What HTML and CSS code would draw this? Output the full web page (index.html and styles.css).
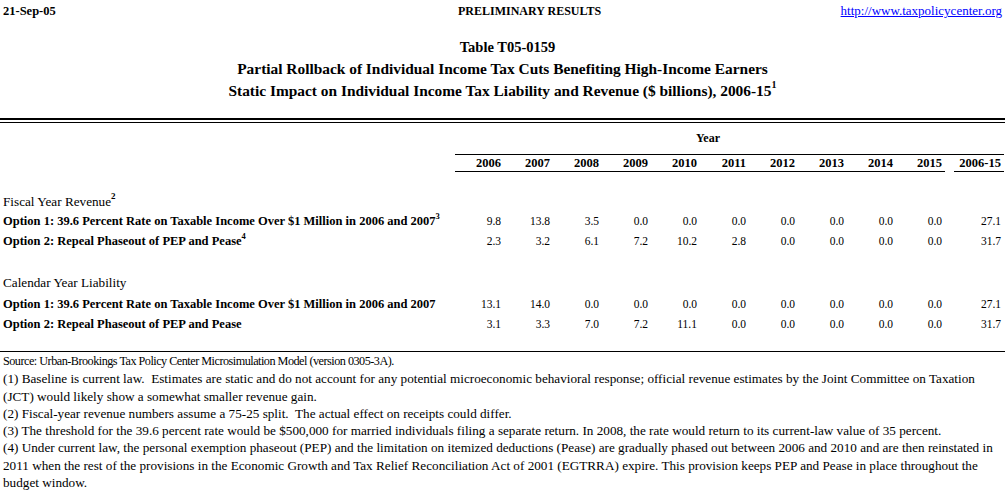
FILE: index.html
```html
<!DOCTYPE html>
<html>
<head>
<meta charset="utf-8">
<link rel="stylesheet" href="styles.css">
</head>
<body>
<div class="topbar">
  <div class="date">21-Sep-05</div>
  <div class="prelim">PRELIMINARY RESULTS</div>
  <div class="url"><a href="#">http://www.taxpolicycenter.org</a></div>
</div>
<div class="title">
  <div class="t1">Table T05-0159</div>
  <div>Partial Rollback of Individual Income Tax Cuts Benefiting High-Income Earners</div>
  <div>Static Impact on Individual Income Tax Liability and Revenue ($ billions), 2006-15<sup class="sup-title">1</sup></div>
</div>
<div class="rule-double"></div>
<table class="grid">
  <colgroup>
    <col class="c-label">
    <col class="c-year"><col class="c-year"><col class="c-year"><col class="c-year"><col class="c-year">
    <col class="c-year"><col class="c-year"><col class="c-year"><col class="c-year"><col class="c-year">
    <col class="c-gap">
    <col class="c-total">
  </colgroup>
  <tr class="r-year">
    <td></td>
    <td colspan="10" class="year-cap">Year</td>
    <td></td><td></td>
  </tr>
  <tr class="r-head">
    <td></td>
    <td class="yh">2006</td><td class="yh">2007</td><td class="yh">2008</td><td class="yh">2009</td><td class="yh">2010</td>
    <td class="yh">2011</td><td class="yh">2012</td><td class="yh">2013</td><td class="yh">2014</td><td class="yh">2015</td>
    <td class="yh-gap"></td>
    <td class="yh">2006-15</td>
  </tr>
  <tr class="r-sp1"><td colspan="13"></td></tr>
  <tr class="r-sec">
    <td colspan="13" class="sec">Fiscal Year Revenue<sup class="sup-sec">2</sup></td>
  </tr>
  <tr class="r-opt">
    <td class="lbl">Option 1: 39.6 Percent Rate on Taxable Income Over $1 Million in 2006 and 2007<sup class="sup-lbl">3</sup></td>
    <td class="num">9.8</td><td class="num">13.8</td><td class="num">3.5</td><td class="num">0.0</td><td class="num">0.0</td>
    <td class="num">0.0</td><td class="num">0.0</td><td class="num">0.0</td><td class="num">0.0</td><td class="num">0.0</td>
    <td></td><td class="num">27.1</td>
  </tr>
  <tr class="r-opt">
    <td class="lbl">Option 2: Repeal Phaseout of PEP and Pease<sup class="sup-lbl">4</sup></td>
    <td class="num">2.3</td><td class="num">3.2</td><td class="num">6.1</td><td class="num">7.2</td><td class="num">10.2</td>
    <td class="num">2.8</td><td class="num">0.0</td><td class="num">0.0</td><td class="num">0.0</td><td class="num">0.0</td>
    <td></td><td class="num">31.7</td>
  </tr>
  <tr class="r-sp2"><td colspan="13"></td></tr>
  <tr class="r-sec2">
    <td colspan="13" class="sec">Calendar Year Liability</td>
  </tr>
  <tr class="r-opt">
    <td class="lbl">Option 1: 39.6 Percent Rate on Taxable Income Over $1 Million in 2006 and 2007</td>
    <td class="num">13.1</td><td class="num">14.0</td><td class="num">0.0</td><td class="num">0.0</td><td class="num">0.0</td>
    <td class="num">0.0</td><td class="num">0.0</td><td class="num">0.0</td><td class="num">0.0</td><td class="num">0.0</td>
    <td></td><td class="num">27.1</td>
  </tr>
  <tr class="r-opt">
    <td class="lbl">Option 2: Repeal Phaseout of PEP and Pease</td>
    <td class="num">3.1</td><td class="num">3.3</td><td class="num">7.0</td><td class="num">7.2</td><td class="num">11.1</td>
    <td class="num">0.0</td><td class="num">0.0</td><td class="num">0.0</td><td class="num">0.0</td><td class="num">0.0</td>
    <td></td><td class="num">31.7</td>
  </tr>
  <tr class="r-sp3"><td colspan="13"></td></tr>
</table>
<div class="notes">
  <div class="src">Source: Urban-Brookings Tax Policy Center Microsimulation Model (version 0305-3A).</div>
  <div>(1) Baseline is current law.&nbsp; Estimates are static and do not account for any potential microeconomic behavioral response; official revenue estimates by the Joint Committee on Taxation</div>
  <div>(JCT) would likely show a somewhat smaller revenue gain.</div>
  <div>(2) Fiscal-year revenue numbers assume a 75-25 split.&nbsp; The actual effect on receipts could differ.</div>
  <div>(3) The threshold for the 39.6 percent rate would be $500,000 for married individuals filing a separate return. In 2008, the rate would return to its current-law value of 35 percent.</div>
  <div>(4) Under current law, the personal exemption phaseout (PEP) and the limitation on itemized deductions (Pease) are gradually phased out between 2006 and 2010 and are then reinstated in</div>
  <div>2011 when the rest of the provisions in the Economic Growth and Tax Relief Reconciliation Act of 2001 (EGTRRA) expire. This provision keeps PEP and Pease in place throughout the</div>
  <div>budget window.</div>
</div>
</body>
</html>
```
FILE: styles.css
```css
* { box-sizing: border-box; }
html, body { margin: 0; padding: 0; background: #fff; }
body {
  width: 1005px;
  font-family: "Liberation Serif", "Times New Roman", serif;
  color: #000;
}

/* top bar */
.topbar {
  display: grid;
  grid-template-columns: 455px auto 1fr;
  padding: 3px 3px 0 3px;
  height: 19px;
  font-size: 12px;
  line-height: 16px;
  white-space: nowrap;
}
.date { font-weight: bold; font-size: 12.5px; }
.prelim { font-weight: bold; }
.url { text-align: right; font-size: 13px; }
.url a { color: #0000ff; text-decoration: underline; }

/* title */
.title {
  margin-top: 17px;
  text-align: center;
  font-weight: bold;
  font-size: 15.4px;
  line-height: 22px;
  white-space: nowrap;
}
.title .t1 { font-size: 14.5px; padding-left: 10px; }
.sup-title {
  font-size: 10px;
  line-height: 0;
  vertical-align: 8px;
}

.rule-double {
  margin-top: 16px;
  height: 5px;
  border-top: 2px solid #000;
  border-bottom: 1px solid #000;
}

/* data grid */
.grid {
  width: 1004px;
  table-layout: fixed;
  border-collapse: separate;
  border-spacing: 0;
}
.c-label { width: 455px; }
.c-year { width: 49px; }
.c-gap { width: 9px; }
.c-total { width: 50px; }
.grid td {
  padding: 0;
  vertical-align: top;
  white-space: nowrap;
}

.r-year { height: 31px; }
.year-cap {
  padding-top: 7px !important;
  padding-left: 16px !important;
  text-align: center;
  font-weight: bold;
  font-size: 12px;
  line-height: 16px;
}

.r-head { height: 18px; }
.yh {
  border-top: 1px solid #000;
  border-bottom: 1px solid #000;
  text-align: right;
  padding-right: 3px !important;
  font-weight: bold;
  font-size: 12.5px;
  line-height: 16px;
}
.yh-gap { border-top: 1px solid #000; }

.r-sp1 { height: 21px; }
.r-sec { height: 19px; }
.r-sp2 { height: 22px; }
.r-sec2 { height: 21px; }
.r-sp3 { height: 16px; }
.r-sec .sec { padding-top: 1px !important; }
.r-sec2 .sec { padding-top: 1px !important; }
.sec {
  padding-left: 3px !important;
  font-size: 13.2px;
  line-height: 16px;
}
.sup-sec {
  font-size: 9px;
  font-weight: bold;
  line-height: 0;
  vertical-align: 7px;
}

.r-opt { height: 20px; }
.lbl {
  padding-left: 3px !important;
  font-weight: bold;
  font-size: 12.5px;
  line-height: 18px;
}
.sup-lbl {
  font-size: 8.5px;
  line-height: 0;
  vertical-align: 6px;
}
.num {
  text-align: right;
  padding-right: 3px !important;
  font-size: 11.5px;
  line-height: 18px;
}

/* footnotes */
.notes {
  border-top: 1px solid #000;
  padding: 1px 0 0 3px;
  font-size: 13.2px;
  line-height: 17.3px;
  white-space: nowrap;
}
.notes .src { font-size: 12.2px; letter-spacing: -0.5px; }
```
